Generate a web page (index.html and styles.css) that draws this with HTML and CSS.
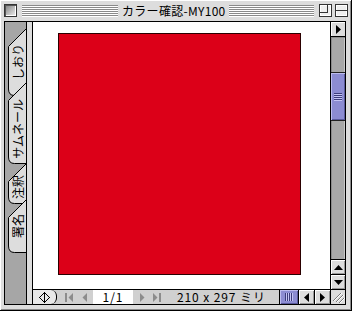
FILE: index.html
```html
<!DOCTYPE html>
<html lang="ja">
<head>
<meta charset="utf-8">
<title>カラー確認-MY100</title>
<link rel="stylesheet" href="styles.css">
</head>
<body>
<div class="window">
  <div class="titlebar">
    <span class="close-box"></span>
    <span class="stripes left"></span>
    <span class="title">カラー確認-MY100</span>
    <span class="stripes right"></span>
    <svg class="zoom-box" width="13" height="13" viewBox="0 0 13 13">
      <rect x="0.5" y="0.5" width="12" height="12" fill="#eeeeee" stroke="#333"/>
      <rect x="1.5" y="1.5" width="10" height="10" fill="none" stroke="#fff"/>
      <rect x="0.5" y="0.5" width="8" height="8" fill="none" stroke="#333"/>
    </svg>
    <svg class="collapse-box" width="13" height="13" viewBox="0 0 13 13">
      <rect x="0.5" y="0.5" width="12" height="12" fill="#eeeeee" stroke="#333"/>
      <rect x="1.5" y="1.5" width="10" height="10" fill="none" stroke="#fff"/>
      <line x1="0" y1="6.5" x2="13" y2="6.5" stroke="#333"/>
    </svg>
  </div>
  <div class="main">
    <div class="tabs">
      <svg class="tab-shapes" width="21" height="282" viewBox="0 0 21 282">
        <path d="M21.5 6.5 L3.5 24.5 L3.5 67 Q3.5 73.5 9.5 73.5 L21.5 73.5 Z"/>
        <path d="M21.5 60.5 L3.5 78.5 L3.5 135 Q3.5 141.5 9.5 141.5 L21.5 141.5 Z"/>
        <path d="M21.5 141.5 L3.5 159.5 L3.5 175 Q3.5 181.5 9.5 181.5 L21.5 181.5 Z"/>
        <path d="M21.5 177.5 L3.5 195.5 L3.5 224 Q3.5 230.5 9.5 230.5 L21.5 230.5 Z"/>
      </svg>
      <span class="tab-label t1">しおり</span>
      <span class="tab-label t2">サムネール</span>
      <span class="tab-label t3">注釈</span>
      <span class="tab-label t4">署名</span>
    </div>
    <div class="strip"></div>
    <div class="doc">
      <div class="page-row">
        <div class="page">
          <div class="sheet"></div>
        </div>
        <div class="vscroll">
          <div class="sb-top">
            <svg width="5" height="9" viewBox="0 0 5 9"><path d="M0 0 L5 4.5 L0 9 Z" fill="#000"/></svg>
          </div>
          <div class="track">
            <div class="thumb">
              <svg width="8" height="8" viewBox="0 0 8 8">
                <path d="M0 0.5 H8 M0 2.5 H8 M0 4.5 H8 M0 6.5 H8" stroke="#3c3c7c"/>
                <path d="M0 1.5 H8 M0 3.5 H8 M0 5.5 H8 M0 7.5 H8" stroke="#c4c4f4"/>
              </svg>
            </div>
          </div>
          <div class="sb-btn">
            <svg width="9" height="5" viewBox="0 0 9 5"><path d="M0 5 L4.5 0 L9 5 Z" fill="#000"/></svg>
          </div>
          <div class="sb-btn">
            <svg width="9" height="5" viewBox="0 0 9 5"><path d="M0 0 L9 0 L4.5 5 Z" fill="#000"/></svg>
          </div>
        </div>
      </div>
      <div class="statusbar">
        <div class="nav-toggle">
          <svg width="11" height="11" viewBox="0 0 11 11" shape-rendering="crispEdges">
            <path d="M5.5 0.5 L0.5 5.5 L5.5 10.5 Z M5.5 0.5 L10.5 5.5 L5.5 10.5" fill="none" stroke="#000"/>
          </svg>
        </div>
        <svg class="nav first" width="8" height="9" viewBox="0 0 8 9"><path d="M0 0 H2 V9 H0 Z M8 0 L3.5 4.5 L8 9 Z" fill="#8c8c8c"/></svg>
        <svg class="nav prev" width="6" height="9" viewBox="0 0 6 9"><path d="M5 0 L0.5 4.5 L5 9 Z" fill="#8c8c8c"/></svg>
        <div class="field">1/1</div>
        <svg class="nav next" width="6" height="9" viewBox="0 0 6 9"><path d="M1 0 L5.5 4.5 L1 9 Z" fill="#8c8c8c"/></svg>
        <svg class="nav last" width="9" height="9" viewBox="0 0 9 9"><path d="M0 0 L4.5 4.5 L0 9 Z M6 0 H8 V9 H6 Z" fill="#8c8c8c"/></svg>
        <span class="size">210 x 297 ミリ</span>
        <span class="spacer"></span>
        <div class="hthumb">
          <svg width="8" height="8" viewBox="0 0 8 8">
            <path d="M0.5 0 V8 M2.5 0 V8 M4.5 0 V8 M6.5 0 V8" stroke="#3c3c7c"/>
            <path d="M1.5 0 V8 M3.5 0 V8 M5.5 0 V8 M7.5 0 V8" stroke="#c4c4f4"/>
          </svg>
        </div>
        <div class="hbtn">
          <svg width="5" height="9" viewBox="0 0 5 9"><path d="M5 0 L0 4.5 L5 9 Z" fill="#000"/></svg>
        </div>
        <div class="hbtn">
          <svg width="5" height="9" viewBox="0 0 5 9"><path d="M0 0 L5 4.5 L0 9 Z" fill="#000"/></svg>
        </div>
        <div class="grip">
          <svg width="14" height="14" viewBox="0 0 14 14">
            <path d="M2 11 L10 3 M5 12 L12 5 M8 13 L13 8" stroke="#7a7a7a"/>
            <path d="M3 11 L11 3 M6 12 L13 5 M9 13 L14 8" stroke="#ffffff"/>
          </svg>
        </div>
      </div>
    </div>
  </div>
</div>
</body>
</html>
```

FILE: styles.css
```css
* {
  box-sizing: border-box;
}

html,
body {
  margin: 0;
  padding: 0;
}

body {
  width: 352px;
  height: 311px;
  overflow: hidden;
  background: #dddddd;
  font-family: "Noto Sans CJK JP", "Noto Sans", sans-serif;
  color: #000;
}

.window {
  width: 352px;
  height: 311px;
  display: flex;
  flex-direction: column;
  background: #dddddd;
  border-right: 1px solid #000;
  border-bottom: 1px solid #000;
  box-shadow: inset 1px 1px 0 #ffffff, inset -1px -1px 0 #8a8a8a;
}

/* ---------- title bar ---------- */
.titlebar {
  height: 21px;
  flex: none;
  display: flex;
  align-items: flex-start;
  padding: 4px 3px 0 4px;
}

.close-box {
  width: 13px;
  height: 13px;
  flex: none;
  border: 1px solid #333;
  background: linear-gradient(135deg, #7c7c7c, #f2f2f2);
  box-shadow: inset 1px 1px 0 #555, inset -1px -1px 0 #fff;
}

.stripes {
  height: 12px;
  margin-top: 1px;
  background: repeating-linear-gradient(to bottom, #8a8a8a 0 1px, #ffffff 1px 2px);
}

.stripes.left {
  width: 96px;
  flex: none;
  margin-left: 5px;
}

.stripes.right {
  flex: 1;
  margin-right: 5px;
}

.title {
  font-size: 12px;
  line-height: 13px;
  height: 13px;
  margin: 0 3px 0 4px;
  white-space: nowrap;
  letter-spacing: 0.3px;
}

.zoom-box,
.collapse-box {
  flex: none;
  display: block;
}

.collapse-box {
  margin-left: 3px;
}

/* ---------- main frame ---------- */
.main {
  flex: 1;
  min-height: 0;
  margin: 0 5px 5px 4px;
  border: 1px solid #000;
  display: flex;
}

.tabs {
  position: relative;
  width: 22px;
  flex: none;
  background: #a6a6a6;
  border-right: 1px solid #000;
  display: flex;
  flex-direction: column;
}

.tab-shapes {
  position: absolute;
  left: 0;
  top: 0;
  overflow: hidden;
}

.tab-shapes path {
  fill: #dddddd;
  stroke: #000;
  stroke-width: 1;
}

.tab-label {
  position: relative;
  width: 12px;
  margin-left: 7px;
  font-size: 12px;
  line-height: 12px;
  writing-mode: vertical-rl;
  text-orientation: sideways;
  transform: rotate(180deg);
  white-space: nowrap;
}

.t1 { margin-top: 22px; }
.t2 { margin-top: 19px; }
.t3 { margin-top: 16px; }
.t4 { margin-top: 15px; }

.strip {
  width: 5px;
  flex: none;
  background: #dddddd;
}

.doc {
  flex: 1;
  min-width: 0;
  border-left: 1px solid #000;
  display: flex;
  flex-direction: column;
}

.page-row {
  flex: 1;
  min-height: 0;
  display: flex;
}

.page {
  flex: 1;
  background: #ffffff;
  overflow: hidden;
}

.sheet {
  width: 243px;
  height: 242px;
  margin: 11px 0 0 25px;
  background: #dc0018;
  border: 1px solid #2a0000;
}

/* ---------- vertical scroll bar ---------- */
.vscroll {
  width: 15px;
  flex: none;
  border-left: 1px solid #000;
  display: flex;
  flex-direction: column;
}

.sb-top {
  height: 15px;
  flex: none;
  border-bottom: 1px solid #000;
  background: #dddddd;
  box-shadow: inset 1px 1px 0 #fff;
  display: flex;
  align-items: center;
  justify-content: center;
  padding-left: 1px;
}

.track {
  flex: 1;
  background: #a8a8a8;
  box-shadow: inset 1px 1px 0 #8a8a8a, inset -1px 0 0 #c8c8c8;
}

.thumb {
  height: 49px;
  margin-top: 35px;
  background: #8c8cd2;
  border-top: 1px solid #222;
  border-bottom: 1px solid #222;
  box-shadow: inset 1px 1px 0 #bcbcee, inset -1px -1px 0 #5a5a9c;
  display: flex;
  align-items: center;
  justify-content: center;
}

.sb-btn {
  height: 15px;
  flex: none;
  border-top: 1px solid #000;
  background: #dddddd;
  box-shadow: inset 1px 1px 0 #fff, inset -1px -1px 0 #999;
  display: flex;
  align-items: center;
  justify-content: center;
}

/* ---------- status bar ---------- */
.statusbar {
  height: 15px;
  flex: none;
  border-top: 1px solid #000;
  background: #d0d0d0;
  display: flex;
  align-items: stretch;
  font-size: 12px;
  line-height: 14px;
}

.nav-toggle {
  width: 24px;
  flex: none;
  background: #e8e8e8;
  border-right: 1px solid #000;
  border-radius: 0 6px 6px 0;
  display: flex;
  align-items: center;
  justify-content: center;
}

.nav {
  flex: none;
  align-self: center;
  display: block;
}

.first { margin-left: 8px; }
.prev { margin-left: 9px; }
.next { margin-left: 6px; }
.last { margin-left: 8px; }

.field {
  width: 40px;
  flex: none;
  margin-left: 5px;
  background: #ffffff;
  text-align: center;
  letter-spacing: 1px;
}

.size {
  margin-left: 15px;
  white-space: nowrap;
  letter-spacing: 0.9px;
}

.spacer {
  flex: 1;
}

.hthumb {
  width: 19px;
  flex: none;
  border-left: 1px solid #000;
  background: #8c8cd2;
  box-shadow: inset 1px 1px 0 #bcbcee, inset -1px -1px 0 #5a5a9c;
  display: flex;
  align-items: center;
  justify-content: center;
}

.hbtn {
  width: 16px;
  flex: none;
  border-left: 1px solid #000;
  background: #dddddd;
  box-shadow: inset 1px 1px 0 #fff, inset -1px -1px 0 #999;
  display: flex;
  align-items: center;
  justify-content: center;
}

.grip {
  width: 15px;
  flex: none;
  border-left: 1px solid #000;
  background: #dddddd;
  display: flex;
  align-items: center;
  justify-content: center;
}
```
